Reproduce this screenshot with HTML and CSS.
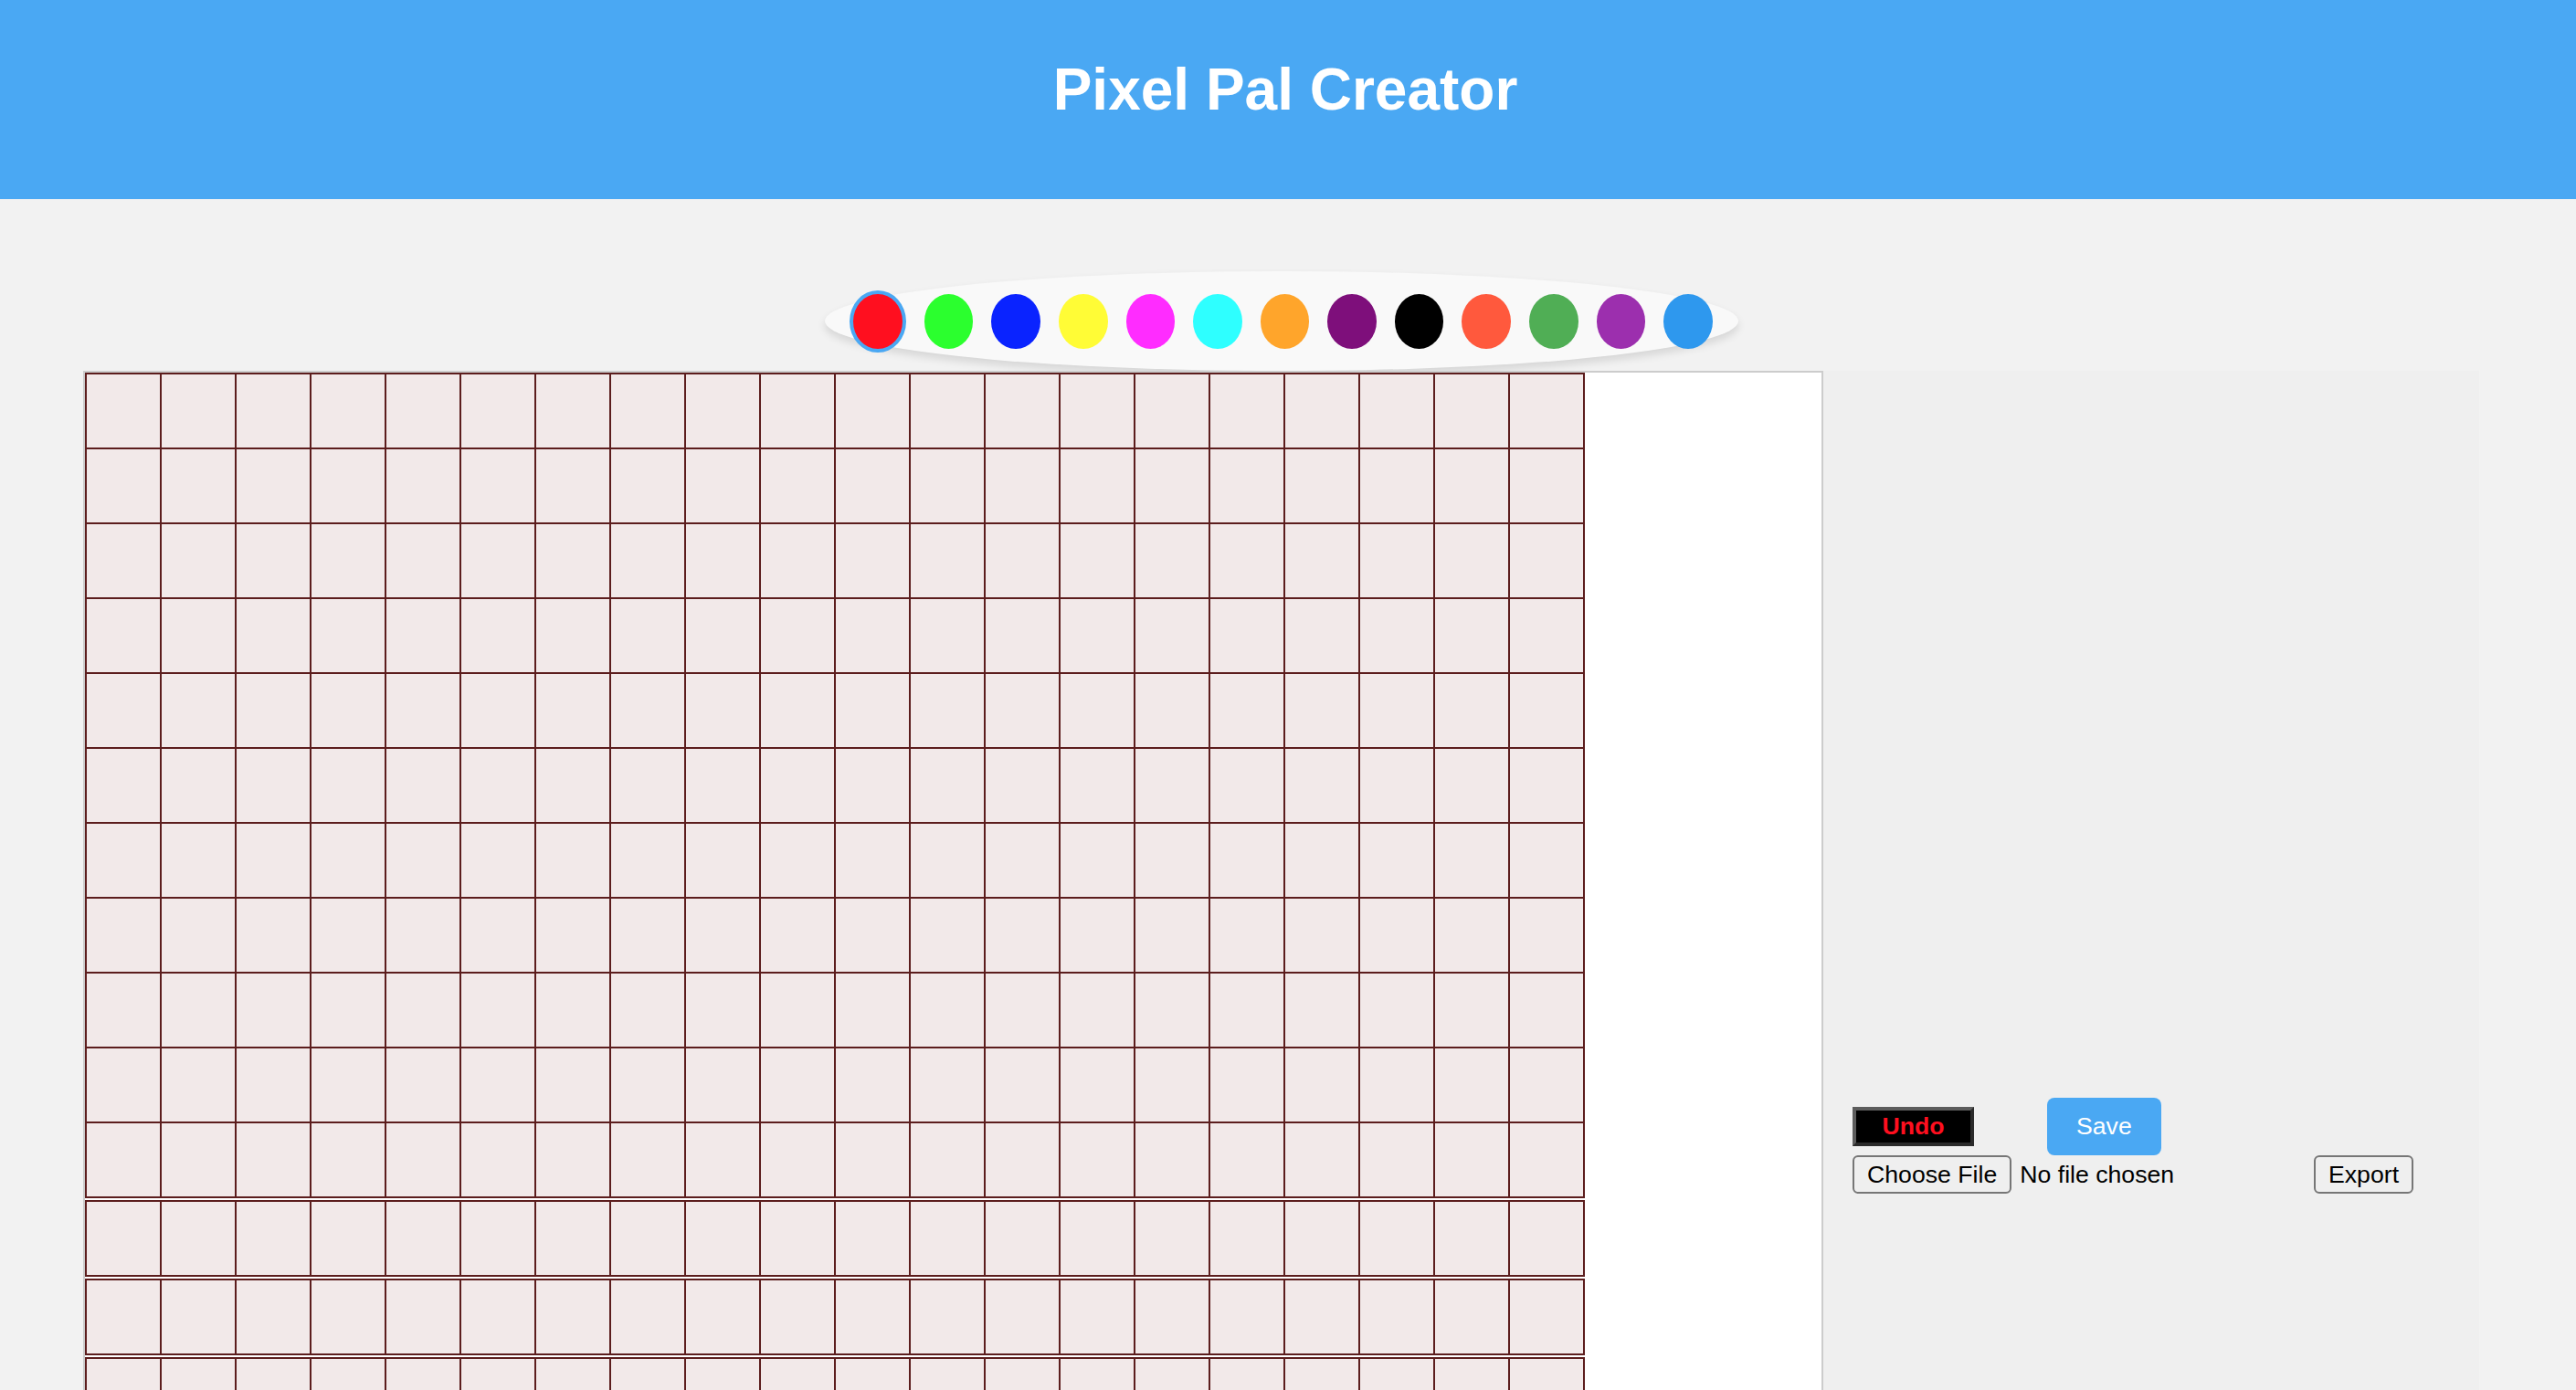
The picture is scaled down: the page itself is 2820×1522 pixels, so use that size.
FILE: index.html
```html
<!DOCTYPE html>
<html lang="en">
<head>
<meta charset="utf-8">
<title>Pixel Pal Creator</title>
<link rel="stylesheet" href="styles.css">
</head>
<body>
<header class="header">
  <h1 class="title">Pixel Pal Creator</h1>
</header>
<main class="main">
  <div class="palette">
    <div class="swatch selected" style="background:#ff0f1f"></div>
    <div class="swatch" style="background:#2bff2e"></div>
    <div class="swatch" style="background:#0a23ff"></div>
    <div class="swatch" style="background:#fffc36"></div>
    <div class="swatch" style="background:#ff2cff"></div>
    <div class="swatch" style="background:#2effff"></div>
    <div class="swatch" style="background:#ffa52b"></div>
    <div class="swatch" style="background:#7e0f7b"></div>
    <div class="swatch" style="background:#000000"></div>
    <div class="swatch" style="background:#ff593d"></div>
    <div class="swatch" style="background:#50ae55"></div>
    <div class="swatch" style="background:#9c2fae"></div>
    <div class="swatch" style="background:#2e98ee"></div>
  </div>
  <div class="workspace">
    <div class="board">
      <div class="grid">
        <div class="px"></div><div class="px"></div><div class="px"></div><div class="px"></div><div class="px"></div><div class="px"></div><div class="px"></div><div class="px"></div><div class="px"></div><div class="px"></div><div class="px"></div><div class="px"></div><div class="px"></div><div class="px"></div><div class="px"></div><div class="px"></div><div class="px"></div><div class="px"></div><div class="px"></div><div class="px"></div>
        <div class="px"></div><div class="px"></div><div class="px"></div><div class="px"></div><div class="px"></div><div class="px"></div><div class="px"></div><div class="px"></div><div class="px"></div><div class="px"></div><div class="px"></div><div class="px"></div><div class="px"></div><div class="px"></div><div class="px"></div><div class="px"></div><div class="px"></div><div class="px"></div><div class="px"></div><div class="px"></div>
        <div class="px"></div><div class="px"></div><div class="px"></div><div class="px"></div><div class="px"></div><div class="px"></div><div class="px"></div><div class="px"></div><div class="px"></div><div class="px"></div><div class="px"></div><div class="px"></div><div class="px"></div><div class="px"></div><div class="px"></div><div class="px"></div><div class="px"></div><div class="px"></div><div class="px"></div><div class="px"></div>
        <div class="px"></div><div class="px"></div><div class="px"></div><div class="px"></div><div class="px"></div><div class="px"></div><div class="px"></div><div class="px"></div><div class="px"></div><div class="px"></div><div class="px"></div><div class="px"></div><div class="px"></div><div class="px"></div><div class="px"></div><div class="px"></div><div class="px"></div><div class="px"></div><div class="px"></div><div class="px"></div>
        <div class="px"></div><div class="px"></div><div class="px"></div><div class="px"></div><div class="px"></div><div class="px"></div><div class="px"></div><div class="px"></div><div class="px"></div><div class="px"></div><div class="px"></div><div class="px"></div><div class="px"></div><div class="px"></div><div class="px"></div><div class="px"></div><div class="px"></div><div class="px"></div><div class="px"></div><div class="px"></div>
        <div class="px"></div><div class="px"></div><div class="px"></div><div class="px"></div><div class="px"></div><div class="px"></div><div class="px"></div><div class="px"></div><div class="px"></div><div class="px"></div><div class="px"></div><div class="px"></div><div class="px"></div><div class="px"></div><div class="px"></div><div class="px"></div><div class="px"></div><div class="px"></div><div class="px"></div><div class="px"></div>
        <div class="px"></div><div class="px"></div><div class="px"></div><div class="px"></div><div class="px"></div><div class="px"></div><div class="px"></div><div class="px"></div><div class="px"></div><div class="px"></div><div class="px"></div><div class="px"></div><div class="px"></div><div class="px"></div><div class="px"></div><div class="px"></div><div class="px"></div><div class="px"></div><div class="px"></div><div class="px"></div>
        <div class="px"></div><div class="px"></div><div class="px"></div><div class="px"></div><div class="px"></div><div class="px"></div><div class="px"></div><div class="px"></div><div class="px"></div><div class="px"></div><div class="px"></div><div class="px"></div><div class="px"></div><div class="px"></div><div class="px"></div><div class="px"></div><div class="px"></div><div class="px"></div><div class="px"></div><div class="px"></div>
        <div class="px"></div><div class="px"></div><div class="px"></div><div class="px"></div><div class="px"></div><div class="px"></div><div class="px"></div><div class="px"></div><div class="px"></div><div class="px"></div><div class="px"></div><div class="px"></div><div class="px"></div><div class="px"></div><div class="px"></div><div class="px"></div><div class="px"></div><div class="px"></div><div class="px"></div><div class="px"></div>
        <div class="px"></div><div class="px"></div><div class="px"></div><div class="px"></div><div class="px"></div><div class="px"></div><div class="px"></div><div class="px"></div><div class="px"></div><div class="px"></div><div class="px"></div><div class="px"></div><div class="px"></div><div class="px"></div><div class="px"></div><div class="px"></div><div class="px"></div><div class="px"></div><div class="px"></div><div class="px"></div>
        <div class="px"></div><div class="px"></div><div class="px"></div><div class="px"></div><div class="px"></div><div class="px"></div><div class="px"></div><div class="px"></div><div class="px"></div><div class="px"></div><div class="px"></div><div class="px"></div><div class="px"></div><div class="px"></div><div class="px"></div><div class="px"></div><div class="px"></div><div class="px"></div><div class="px"></div><div class="px"></div>
      </div>
      <div class="grid">
        <div class="px"></div><div class="px"></div><div class="px"></div><div class="px"></div><div class="px"></div><div class="px"></div><div class="px"></div><div class="px"></div><div class="px"></div><div class="px"></div><div class="px"></div><div class="px"></div><div class="px"></div><div class="px"></div><div class="px"></div><div class="px"></div><div class="px"></div><div class="px"></div><div class="px"></div><div class="px"></div>
      </div>
      <div class="grid">
        <div class="px"></div><div class="px"></div><div class="px"></div><div class="px"></div><div class="px"></div><div class="px"></div><div class="px"></div><div class="px"></div><div class="px"></div><div class="px"></div><div class="px"></div><div class="px"></div><div class="px"></div><div class="px"></div><div class="px"></div><div class="px"></div><div class="px"></div><div class="px"></div><div class="px"></div><div class="px"></div>
      </div>
      <div class="grid">
        <div class="px"></div><div class="px"></div><div class="px"></div><div class="px"></div><div class="px"></div><div class="px"></div><div class="px"></div><div class="px"></div><div class="px"></div><div class="px"></div><div class="px"></div><div class="px"></div><div class="px"></div><div class="px"></div><div class="px"></div><div class="px"></div><div class="px"></div><div class="px"></div><div class="px"></div><div class="px"></div>
      </div>
      <div class="grid">
        <div class="px"></div><div class="px"></div><div class="px"></div><div class="px"></div><div class="px"></div><div class="px"></div><div class="px"></div><div class="px"></div><div class="px"></div><div class="px"></div><div class="px"></div><div class="px"></div><div class="px"></div><div class="px"></div><div class="px"></div><div class="px"></div><div class="px"></div><div class="px"></div><div class="px"></div><div class="px"></div>
      </div>
      <div class="grid">
        <div class="px"></div><div class="px"></div><div class="px"></div><div class="px"></div><div class="px"></div><div class="px"></div><div class="px"></div><div class="px"></div><div class="px"></div><div class="px"></div><div class="px"></div><div class="px"></div><div class="px"></div><div class="px"></div><div class="px"></div><div class="px"></div><div class="px"></div><div class="px"></div><div class="px"></div><div class="px"></div>
      </div>
      <div class="grid">
        <div class="px"></div><div class="px"></div><div class="px"></div><div class="px"></div><div class="px"></div><div class="px"></div><div class="px"></div><div class="px"></div><div class="px"></div><div class="px"></div><div class="px"></div><div class="px"></div><div class="px"></div><div class="px"></div><div class="px"></div><div class="px"></div><div class="px"></div><div class="px"></div><div class="px"></div><div class="px"></div>
      </div>
      <div class="grid">
        <div class="px"></div><div class="px"></div><div class="px"></div><div class="px"></div><div class="px"></div><div class="px"></div><div class="px"></div><div class="px"></div><div class="px"></div><div class="px"></div><div class="px"></div><div class="px"></div><div class="px"></div><div class="px"></div><div class="px"></div><div class="px"></div><div class="px"></div><div class="px"></div><div class="px"></div><div class="px"></div>
      </div>
      <div class="grid">
        <div class="px"></div><div class="px"></div><div class="px"></div><div class="px"></div><div class="px"></div><div class="px"></div><div class="px"></div><div class="px"></div><div class="px"></div><div class="px"></div><div class="px"></div><div class="px"></div><div class="px"></div><div class="px"></div><div class="px"></div><div class="px"></div><div class="px"></div><div class="px"></div><div class="px"></div><div class="px"></div>
      </div>
      <div class="grid">
        <div class="px"></div><div class="px"></div><div class="px"></div><div class="px"></div><div class="px"></div><div class="px"></div><div class="px"></div><div class="px"></div><div class="px"></div><div class="px"></div><div class="px"></div><div class="px"></div><div class="px"></div><div class="px"></div><div class="px"></div><div class="px"></div><div class="px"></div><div class="px"></div><div class="px"></div><div class="px"></div>
      </div>
    </div>
    <aside class="panel">
      <div class="controls-top">
        <button class="btn-undo" type="button">Undo</button>
        <button class="btn-save" type="button">Save</button>
      </div>
      <div class="controls-file">
        <div class="file-field">
          <label class="file-btn">Choose File<input class="file-input" type="file"></label>
          <span class="file-name">No file chosen</span>
        </div>
        <button class="btn-export" type="button">Export</button>
      </div>
    </aside>
  </div>
</main>
</body>
</html>
```
FILE: styles.css
```css
html, body {
  margin: 0;
  padding: 0;
}

body {
  background: #f2f2f2;
  color: #000;
  font-family: "Liberation Sans", Arial, sans-serif;
}

button, label {
  font: inherit;
}

.header {
  background: #4aa8f3;
  padding: 61px 6px 83px 0;
  text-align: center;
}

.title {
  margin: 0;
  font-size: 64px;
  line-height: 74px;
  font-weight: bold;
  color: #fff;
}

.main {
  width: 2623px;
  margin-left: 91px;
}

.palette {
  width: 1000px;
  height: 109px;
  margin: 79px auto 0;
  box-sizing: border-box;
  padding: 0 20px;
  display: flex;
  justify-content: center;
  align-items: center;
  background: #f9f9f9;
  border-radius: 50%;
  box-shadow: 0 5px 10px rgba(0, 0, 0, 0.12);
}

.swatch {
  flex: none;
  width: 53.6px;
  height: 60px;
  margin: 0 10px;
  border-radius: 50%;
}

.swatch.selected {
  border: 4px solid #4aa8f3;
}

.workspace {
  display: flex;
  align-items: stretch;
}

.board {
  flex: none;
  width: 1905px;
  box-sizing: border-box;
  border: 2px solid #cccccc;
  background: #fff;
}

.grid {
  display: grid;
  grid-template-columns: repeat(20, 80px);
  grid-auto-rows: 80px;
  gap: 2px;
  padding: 2px;
  width: max-content;
  background: #5c1d1d;
}

.grid + .grid {
  margin-top: 2px;
}

.px {
  background: #f2e9e9;
}

.panel {
  flex: none;
  width: 718px;
  box-sizing: border-box;
  background: #efefef;
  padding: 14px 32px 0;
  display: flex;
  flex-direction: column;
  justify-content: center;
}

.controls-top {
  display: flex;
  align-items: center;
  gap: 80px;
}

.btn-undo {
  font-size: 26.67px;
  line-height: 31px;
  font-weight: bold;
  color: #ff0f1f;
  background: #000;
  border: 4px solid;
  border-color: #5c5c5c #2a2a2a #2a2a2a #5c5c5c;
  padding: 2px 28px;
  width: 133px;
  box-sizing: border-box;
}

.btn-save {
  font-size: 26.67px;
  line-height: 31px;
  color: #fff;
  background: #4aa8f3;
  border: none;
  border-radius: 8px;
  padding: 16px 32px;
}

.controls-file {
  display: flex;
  align-items: center;
}

.file-field {
  width: 505px;
  display: flex;
  align-items: center;
  gap: 9px;
  font-size: 26.67px;
  line-height: 30px;
}

.file-btn {
  font-size: 26.67px;
  line-height: 30px;
  padding: 4px 14px;
  border: 2px solid #767676;
  border-radius: 6px;
  background: #efefef;
  color: #000;
}

.file-input {
  display: none;
}

.btn-export {
  font-size: 26.67px;
  line-height: 30px;
  padding: 4px 14px;
  border: 2px solid #767676;
  border-radius: 6px;
  background: #efefef;
  color: #000;
}
```
